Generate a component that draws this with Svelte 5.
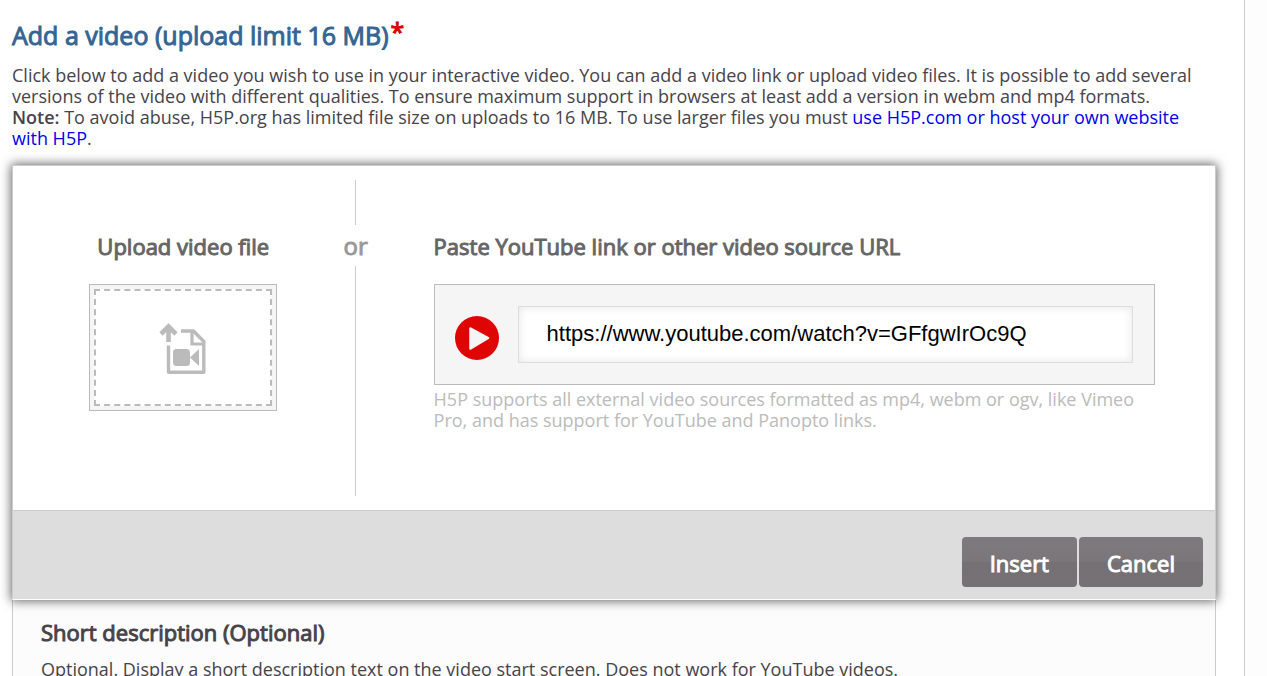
<script>
	let url = $state('https://www.youtube.com/watch?v=GFfgwIrOc9Q');
</script>

<main class="form">
	<h2 class="title">Add a video (upload limit 16 MB)<span class="required">*</span></h2>
	<p class="description">
		Click below to add a video you wish to use in your interactive video. You can add a video link
		or upload video files. It is possible to add several versions of the video with different
		qualities. To ensure maximum support in browsers at least add a version in webm and mp4
		formats.<br />
		<b>Note:</b> To avoid abuse, H5P.org has limited file size on uploads to 16 MB. To use larger
		files you must <a href="#host">use H5P.com or host your own website with H5P</a>.
	</p>

	<div class="dialog" role="dialog" aria-label="Add a video">
		<div class="sources">
			<section class="upload">
				<h3>Upload video file</h3>
				<button class="dropzone" type="button" aria-label="Upload video file">
					<span class="dashes">
						<svg width="48" height="52" viewBox="0 0 48 52" fill="#bbb" stroke="#bbb">
							<path
								d="M2 12 L9.500 4.500 L17 12 M9.500 5 V20"
								fill="none"
								stroke-width="4.600"
							/>
							<path
								d="M22 9 H34.500 L44.800 19.500 V50.300 H9.500 V23.500"
								fill="none"
								stroke-width="3.400"
								stroke-linejoin="round"
							/>
							<path d="M33 9 V22 H44.500" fill="none" stroke-width="3.200" />
							<rect x="14" y="27" width="17" height="17" rx="3.500" stroke="none" />
							<path d="M31 35.500 L40 27 V44 Z" stroke="none" />
						</svg>
					</span>
				</button>
			</section>

			<div class="divider"><span>or</span></div>

			<section class="link">
				<h3><label for="video-url">Paste YouTube link or other video source URL</label></h3>
				<div class="url-box">
					<svg width="44" height="44" viewBox="0 0 44 44">
						<circle cx="22" cy="22" r="22" fill="#df0505" />
						<path
							d="M15.500 12.500 L33 22 L15.500 32.500 Z"
							fill="#f5f5f5"
							stroke="#f5f5f5"
							stroke-width="2.500"
							stroke-linejoin="round"
						/>
					</svg>
					<input id="video-url" type="text" bind:value={url} />
				</div>
				<p class="hint">
					H5P supports all external video sources formatted as mp4, webm or ogv, like Vimeo Pro, and
					has support for YouTube and Panopto links.
				</p>
			</section>
		</div>

		<div class="actions">
			<button type="button">Insert</button>
			<button type="button">Cancel</button>
		</div>
	</div>

	<section class="field">
		<h3>Short description (Optional)</h3>
		<p>Optional. Display a short description text on the video start screen. Does not work for YouTube videos.</p>
	</section>
</main>

<style>
	:global(body) {
		margin: 0;
		overflow: hidden;
		background: #fdfdfd;
	}
	.form {
		box-sizing: border-box;
		min-height: 100vh;
		margin-right: 22px;
		padding: 15px 28px 0 12px;
		border-right: 1px solid #ccc;
		background: #fff;
		color: #474349;
		font-family: 'Open Sans', sans-serif;
		font-size: 18px;
		line-height: 21px;
	}
	h2, h3, p {
		margin: 0;
	}
	h2, h3, .actions button {
		font-weight: 400;
		-webkit-text-stroke: 1px currentColor;
	}
	h3 {
		font-size: 22px;
		line-height: 30px;
	}
	b {
		font-weight: 600;
	}
	.title {
		display: flex;
		align-items: flex-start;
		gap: 2px;
		color: #356593;
		font-size: 25px;
		line-height: 40px;
	}
	.required {
		color: #d00;
		line-height: 32px;
	}
	.description {
		padding: 10px 0 16px;
	}
	.description a {
		color: #00e;
		text-decoration: none;
	}

	.dialog {
		position: relative;
		border: 1px solid #ccc;
		border-bottom-color: #fff;
		background: #fff;
		box-shadow: 0 0 10px 1px rgba(0, 0, 0, 0.6);
	}
	.sources {
		display: flex;
		padding: 14px 0;
		color: #666;
	}
	.upload {
		display: flex;
		flex: 0 0 30%;
		flex-direction: column;
		align-items: center;
		gap: 23px;
		box-sizing: border-box;
		padding: 51px 20px 0 0;
	}
	.dropzone {
		width: 188px;
		height: 127px;
		padding: 4px;
		border: 1px solid #bbb;
		background: #f5f5f5;
	}
	.dashes {
		display: flex;
		align-items: center;
		justify-content: center;
		box-sizing: border-box;
		height: 100%;
		border: 2px dashed #bbb;
		background: #fff;
	}
	.divider {
		display: flex;
		flex-direction: column;
		align-items: center;
		width: 26px;
		margin-left: -31px;
		color: #999;
		font-size: 24px;
		line-height: 41px;
		-webkit-text-stroke: 1px currentColor;
	}
	.divider::before, .divider::after {
		content: '';
		width: 1px;
		height: 45px;
		background: #ccc;
	}
	.divider::after {
		flex: 1;
		min-height: 230px;
	}
	.link {
		flex: 1;
		padding: 51px 60px 0 65px;
	}
	.url-box {
		display: flex;
		align-items: center;
		gap: 19px;
		margin-top: 23px;
		padding: 21px 21px 21px 20px;
		border: 1px solid #bbb;
		background: #f5f5f5;
	}
	.url-box svg {
		margin-top: 6px;
	}
	input {
		flex: 1;
		box-sizing: border-box;
		min-width: 0;
		height: 57px;
		padding: 0 28px 2px;
		border: 1px solid #ddd;
		background: #fff;
		box-shadow: inset 0 0 10px rgba(0, 0, 0, 0.1);
		color: #000;
		font: 22px 'Liberation Sans', Arial, sans-serif;
	}
	.hint {
		margin-top: 4px;
		color: #bbb;
	}

	.actions {
		display: flex;
		justify-content: flex-end;
		gap: 2px;
		padding: 26px 12px 12px;
		border-top: 1px solid #ccc;
		background: #ddd;
	}
	.actions button {
		height: 50px;
		padding: 2px 28px 0;
		border: 0;
		border-radius: 4px;
		background: linear-gradient(#7d797d, #7a767a 50%, #747074 50%, #757175);
		color: #fff;
		font-family: inherit;
		font-size: 22px;
	}

	.field {
		padding: 17px 28px 0;
		border: solid #ccc;
		border-width: 0 1px;
		background: #fcfcfc;
	}
	.field p {
		padding: 12px 0 24px;
	}
</style>
